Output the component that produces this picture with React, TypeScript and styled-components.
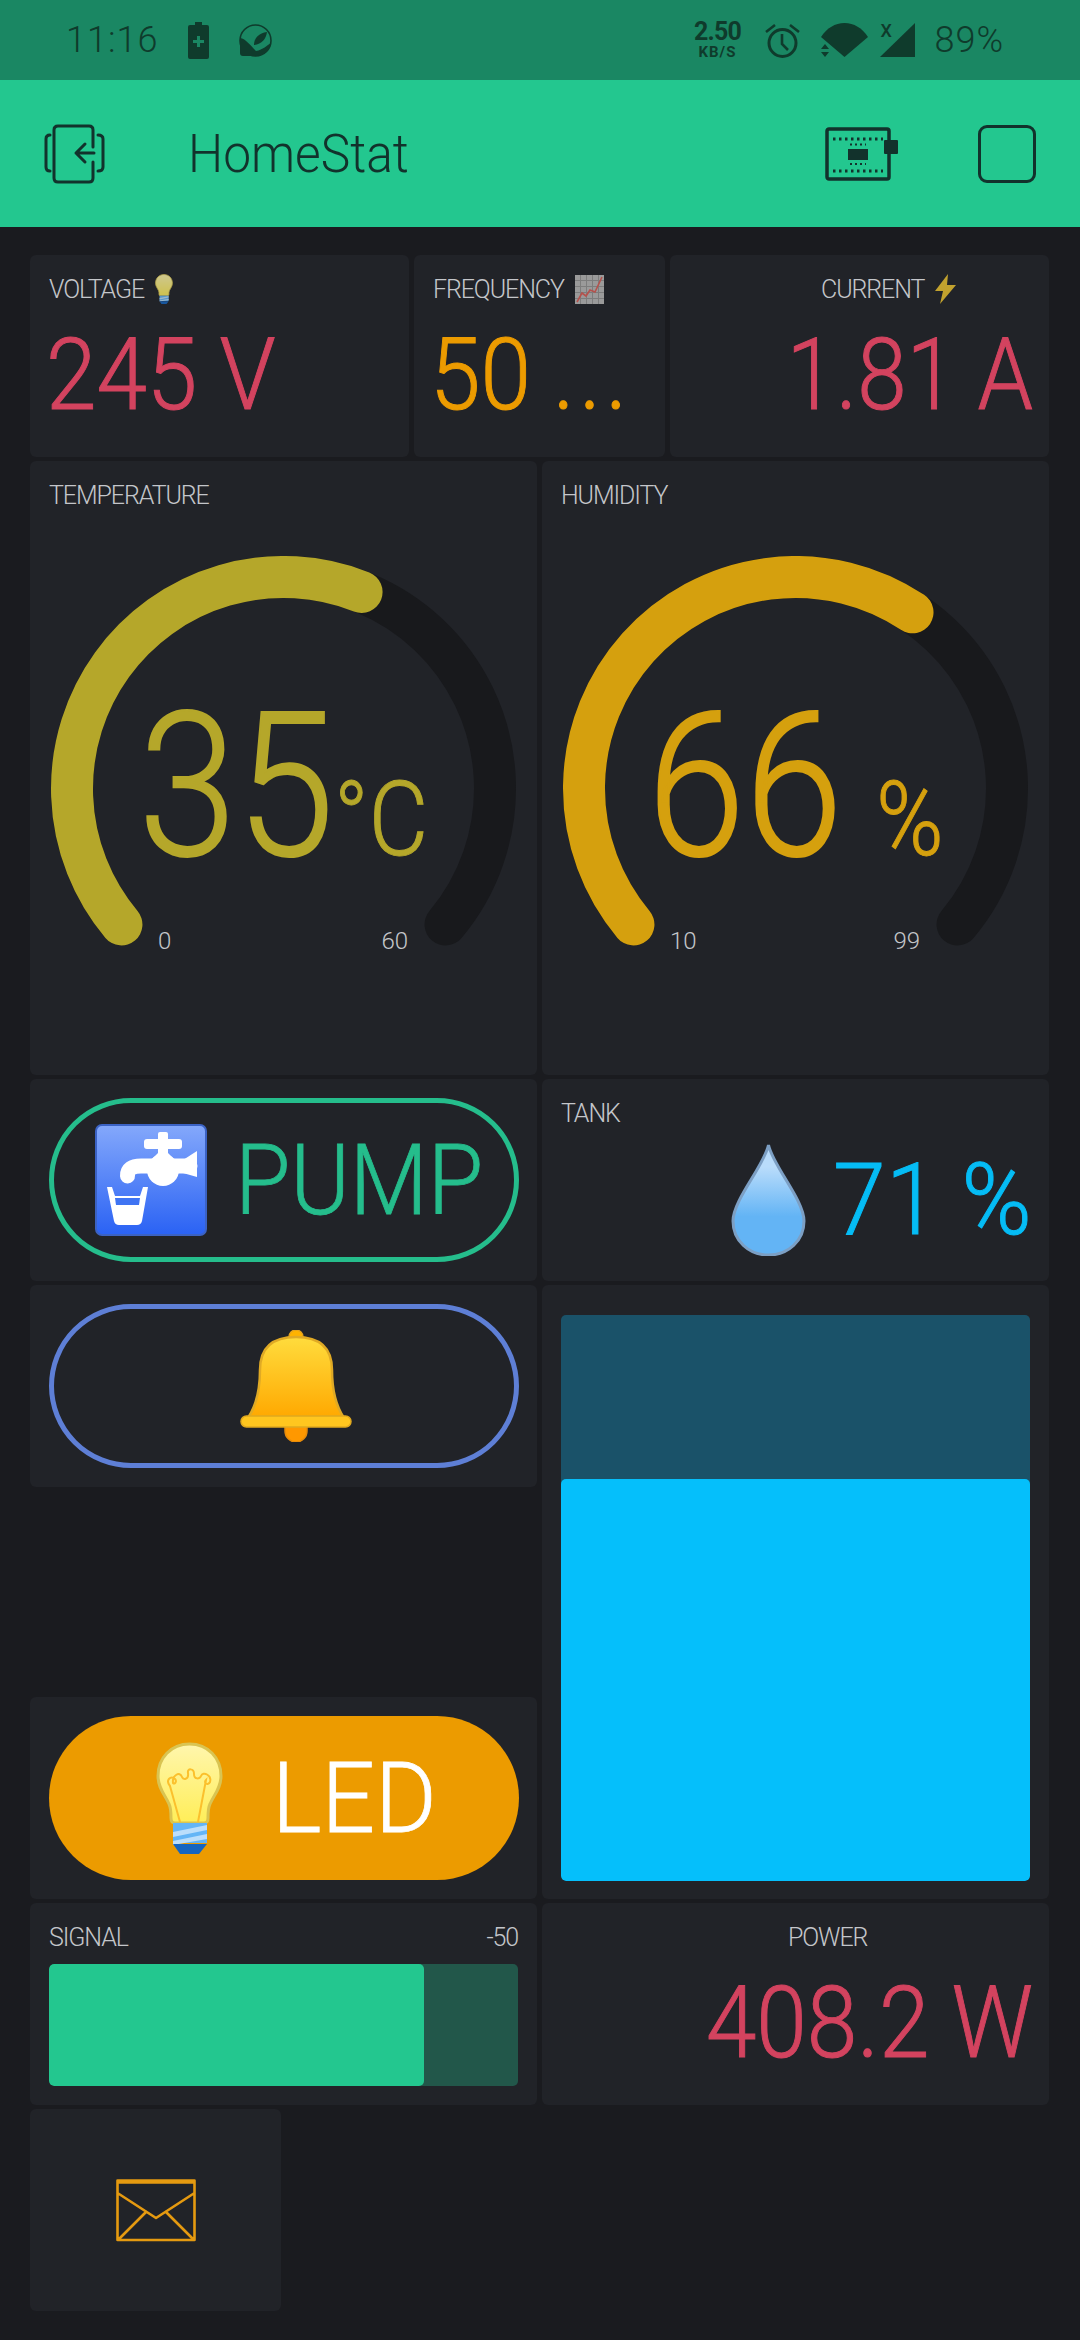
import styled, { createGlobalStyle } from "styled-components";

const GlobalStyle = createGlobalStyle`
  html, body {
    margin: 0;
    padding: 0;
    background: #1a1b1f;
    font-family: "Roboto", "Liberation Sans", sans-serif;
  }
`;

const INK = "#0f3b2c";
const BAR_INK = "#12322c";
const STATUS_BG = "#1a8763";
const RED = "#d3435f";
const ORANGE = "#ec9b00";
const BLUE = "#05bcf5";
const GREEN = "#23c78f";

const Screen = styled.div`
  width: 1080px;
  height: 2340px;
  overflow: hidden;
  background: #1a1b1f;
`;

const StatusBar = styled.div`
  height: 80px;
  box-sizing: border-box;
  padding: 0 76px 0 66px;
  background: ${STATUS_BG};
  color: ${INK};
  display: flex;
  align-items: center;
`;

const StatusText = styled.span`
  font-size: 36px;
  font-weight: 300;
  letter-spacing: 1px;
  display: inline-block;
`;

const StatusLeft = styled.div`
  display: flex;
  align-items: center;
  gap: 30px;
`;

const StatusRight = styled.div`
  margin-left: auto;
  display: flex;
  align-items: center;
`;

const Speed = styled.div`
  width: 50px;
  margin-right: 22px;
  display: flex;
  flex-direction: column;
  align-items: center;
  font-weight: 700;
  font-size: 25px;
  line-height: 24px;
  letter-spacing: -0.8px;
  span {
    font-size: 15px;
    line-height: 16px;
    letter-spacing: 1px;
  }
`;

const SignalWrap = styled.div`
  position: relative;
  width: 35px;
  height: 34px;
  margin-right: 19px;
`;

const SignalMark = styled.span`
  position: absolute;
  top: 0;
  left: 0;
  font-size: 18px;
  line-height: 15px;
  font-weight: 500;
`;

const AppBar = styled.div`
  height: 147px;
  box-sizing: border-box;
  padding: 0 44px;
  background: ${GREEN};
  display: flex;
  align-items: center;
`;

const Title = styled.div`
  margin-left: 82px;
  font-size: 54px;
  font-weight: 300;
  color: ${BAR_INK};
  transform: scaleX(0.92);
  transform-origin: left center;
`;

const BarActions = styled.div`
  margin-left: auto;
  display: flex;
  align-items: center;
  gap: 80px;
`;

const EmptyAction = styled.div`
  width: 58px;
  height: 58px;
  box-sizing: border-box;
  border: 3px solid ${BAR_INK};
  border-radius: 9px;
`;

const Board = styled.div`
  display: grid;
  grid-template-columns: repeat(8, 123px);
  grid-template-rows: repeat(10, 202px);
  column-gap: 5px;
  row-gap: 4px;
  padding: 28px 0 0 30px;
`;

const Card = styled.div<{ $col: string; $row: string }>`
  grid-column: ${(p) => p.$col};
  grid-row: ${(p) => p.$row};
  box-sizing: border-box;
  padding: 19px;
  background: #212328;
  border-radius: 6px;
  display: flex;
  flex-direction: column;
`;

const Label = styled.div<{ $offset?: number }>`
  height: 30px;
  padding-left: ${(p) => p.$offset || 0}px;
  display: flex;
  align-items: center;
  gap: 11px;
  font-size: 25px;
  font-weight: 300;
  letter-spacing: -1.1px;
  color: #c4c6ca;
`;

const Value = styled.div<{ $color: string; $right?: boolean; $squeeze: number }>`
  margin: 21px ${(p) => (p.$right ? "-3px" : "0")} 0 ${(p) => (p.$right ? "0" : "-3px")};
  font-size: 101px;
  line-height: 100px;
  font-weight: 300;
  -webkit-text-stroke: 1px ${(p) => p.$color};
  white-space: nowrap;
  color: ${(p) => p.$color};
  text-align: ${(p) => (p.$right ? "right" : "left")};
  transform: scaleX(${(p) => p.$squeeze});
  transform-origin: ${(p) => (p.$right ? "right" : "left")} center;
`;

const Dots = styled.span`
  letter-spacing: 5px;
`;

const SignalHead = styled.div`
  display: flex;
  justify-content: space-between;
`;

const Gauge = styled.div`
  position: relative;
  width: 469px;
  height: 420px;
  margin-top: 46px;
`;

const Readout = styled.div<{ $color: string }>`
  position: absolute;
  top: 131px;
  left: 0;
  right: 0;
  display: flex;
  justify-content: center;
  align-items: baseline;
  color: ${(p) => p.$color};
  -webkit-text-stroke: 2px ${(p) => p.$color};
  font-weight: 300;
  font-size: 200px;
  line-height: 200px;
  transform: scaleX(0.88);
`;

const Unit = styled.span<{ $gap: number }>`
  margin-left: ${(p) => p.$gap}px;
  font-size: 104px;
  line-height: 100px;
  -webkit-text-stroke-width: 1px;
`;

const Limit = styled.span<{ $side: "left" | "right"; $at: number }>`
  position: absolute;
  top: 370px;
  ${(p) => p.$side}: ${(p) => p.$at}px;
  font-size: 24px;
  line-height: 30px;
  font-weight: 300;
  color: #c4c6ca;
`;

const PillButton = styled.div<{ $border?: string; $fill?: string; $nudge: number }>`
  width: 470px;
  height: 164px;
  box-sizing: border-box;
  padding-left: ${(p) => p.$nudge}px;
  border: ${(p) => (p.$border ? `5px solid ${p.$border}` : "none")};
  background: ${(p) => p.$fill || "transparent"};
  border-radius: 82px;
  display: flex;
  align-items: center;
  justify-content: center;
`;

const ButtonText = styled.span<{ $color: string; $gap: number; $squeeze: number }>`
  margin-left: ${(p) => p.$gap}px;
  font-size: 99px;
  line-height: 100px;
  font-weight: 300;
  -webkit-text-stroke: 0.8px ${(p) => p.$color};
  color: ${(p) => p.$color};
  transform: scaleX(${(p) => p.$squeeze});
  transform-origin: left center;
`;

const TankRow = styled.div`
  margin-top: 16px;
  display: flex;
  justify-content: flex-end;
  align-items: center;
`;

const TankValue = styled.span`
  font-size: 101px;
  line-height: 100px;
  font-weight: 300;
  -webkit-text-stroke: 1px ${BLUE};
  width: 197px;
  margin-left: 27px;
  white-space: nowrap;
  color: ${BLUE};
  transform: scaleX(0.94);
  transform-origin: left center;
`;

const TankCard = styled(Card)`
  padding: 30px 19px 18px;
`;

const TankTrack = styled.div`
  flex: 1;
  background: #1a5269;
  border-radius: 5px;
  display: flex;
  flex-direction: column;
  justify-content: flex-end;
  overflow: hidden;
`;

const TankFill = styled.div`
  background: #05bffb;
  border-radius: 5px;
`;

const SignalTrack = styled.div`
  margin-top: 12px;
  height: 122px;
  background: #22574a;
  border-radius: 5px;
  overflow: hidden;
`;

const SignalFill = styled.div`
  height: 100%;
  background: ${GREEN};
  border-radius: 5px;
`;

const MailCard = styled(Card)`
  align-items: center;
  justify-content: center;
`;

function BatteryIcon() {
  return (
    <svg width="21" height="37" viewBox="0 0 21 37">
      <path d="M7 0h7v3h5q2 0 2 2v30q0 2-2 2H2q-2 0-2-2V5q0-2 2-2h5z" fill={INK} />
      <path d="M9 14h3v4h4v3h-4v4H9v-4H5v-3h4z" fill={STATUS_BG} />
    </svg>
  );
}

function AppBadge() {
  return (
    <svg width="33" height="33" viewBox="0 0 33 33">
      <circle cx="16.5" cy="16.5" r="15.5" fill="none" stroke={INK} strokeWidth="1.6" />
      <path d="M1 14C7 15 11 21 17 27 24 26 28 21 32 19 31 27 24 32 16.5 32H4Q1 32 1 29z" fill={INK} />
      <path d="M15 21C15 14 20 9 28 8 27 15 23 20 15 21z" fill={INK} />
    </svg>
  );
}

function AlarmIcon() {
  return (
    <svg width="37" height="36" viewBox="0 0 37 36" style={{ marginRight: 20 }}>
      <circle cx="18.5" cy="21" r="13.5" fill="none" stroke={INK} strokeWidth="3" />
      <path d="M18 12v10l6 6M2 10l9-7M35 10l-9-7" fill="none" stroke={INK} strokeWidth="2.6" />
    </svg>
  );
}

function WifiIcon() {
  return (
    <svg width="47" height="34" viewBox="0 0 47 34" style={{ marginRight: 12 }}>
      <path d="M0 14C6 5 14 0 23.500 0S41 5 47 14L23.500 34z" fill={INK} />
      <path d="M4 21l4 5H0zM4 34l-4-5H8z" fill={INK} />
    </svg>
  );
}

function SignalIcon() {
  return (
    <SignalWrap>
      <svg width="35" height="34" viewBox="0 0 35 34">
        <path d="M0 34L35 0V34z" fill={INK} />
      </svg>
      <SignalMark>X</SignalMark>
    </SignalWrap>
  );
}

function ExitIcon() {
  return (
    <svg width="62" height="60" viewBox="0 0 62 60">
      <g fill="none" stroke={BAR_INK} strokeWidth="3" strokeLinecap="round" strokeLinejoin="round">
        <path d="M49 23V6q0-4-4-4H14q-4 0-4 4v48q0 4 4 4h31q4 0 4-4V38" />
        <path d="M6 11Q2 11 2 15V43Q2 47 6 47M54 11Q59 11 59 15V43Q59 47 54 47" />
        <path d="M50 29H32M41 20l-9 9 9 9" />
      </g>
    </svg>
  );
}

function BoardIcon() {
  return (
    <svg width="73" height="54" viewBox="0 0 73 54">
      <rect x="2" y="2" width="62" height="50" rx="2" fill="none" stroke={BAR_INK} strokeWidth="3.500" />
      <rect x="59" y="13" width="14" height="14" rx="1" fill={BAR_INK} />
      <rect x="23" y="22" width="20" height="11" fill={BAR_INK} />
      <path d="M8 12H58M8 44H58" stroke={BAR_INK} strokeWidth="3" strokeDasharray="2.500 3.500" />
      <path d="M25 17.500H41M25 37H41" stroke={BAR_INK} strokeWidth="2" strokeDasharray="2 3" />
    </svg>
  );
}

function BulbIcon({ height, dim }: { height: number; dim?: boolean }) {
  return (
    <svg width={(height * 67) / 112} height={height} viewBox="0 0 67 112" opacity={dim ? 0.78 : 1}>
      <defs>
        <linearGradient id="bulbGlass" x1="0" y1="0" x2="0" y2="1">
          <stop offset="0" stopColor="#fff6ad" />
          <stop offset="1" stopColor="#ffee58" />
        </linearGradient>
      </defs>
      <path
        d="M33.500 2C15 2 2 16 2 34 2 46 9 53 13 62 15 66 15 70 15 76 15 79 16 81 19 81H48C51 81 52 79 52 76 52 70 52 66 54 62 58 53 65 46 65 34 65 16 52 2 33.500 2Z"
        fill="url(#bulbGlass)"
        stroke="#d9c452"
        strokeWidth="3"
      />
      {!dim && (
        <path
          d="M24 80L14 44C9 38 15 33 19 37 21 39 19 43 17 41 16 33 24 29 26 35 27 38 33 38 32 31 31 26 38 26 38 32 38 38 44 37 45 34 47 29 56 33 54 40 52 44 47 41 50 38L42 80"
          fill="none"
          stroke="#fbc02d"
          strokeWidth="2"
        />
      )}
      <path d="M17 81H51V101H17z" fill="#64b5f6" />
      <path d="M17 90L51 83V88L17 95zM17 99L51 92V97L17 103z" fill="#bbdefb" />
      <path d="M17 102H51L43 112H24z" fill="#1565c0" />
    </svg>
  );
}

function ChartIcon() {
  return (
    <svg width="29" height="29" viewBox="0 0 29 29">
      <rect width="29" height="29" fill="#9a9a9a" />
      <path
        d="M0 5.500H29M0 11.500H29M0 17.500H29M0 23.500H29M5.500 0V29M11.500 0V29M17.500 0V29M23.500 0V29"
        stroke="#7d7d7d"
        strokeWidth="1"
      />
      <path d="M2 27L7 18 11 21 15 15 20 17 27 2" fill="none" stroke="#b5524d" strokeWidth="1.600" />
    </svg>
  );
}

function BoltIcon() {
  return (
    <svg width="21" height="30" viewBox="0 0 21 30">
      <path d="M13 0L0 17H8L5 30 21 11H12z" fill="#c2a22e" />
    </svg>
  );
}

function TapIcon() {
  return (
    <svg width="112" height="112" viewBox="0 0 112 112">
      <defs>
        <linearGradient id="tapBg" x1="0" y1="0" x2="0" y2="1">
          <stop offset="0" stopColor="#84a8fb" />
          <stop offset="1" stopColor="#2a62f4" />
        </linearGradient>
      </defs>
      <rect x="1" y="1" width="110" height="110" rx="6" fill="url(#tapBg)" stroke="#3b62c4" strokeWidth="2" />
      <rect x="49" y="15" width="38" height="10" rx="3" fill="#fff" />
      <rect x="63" y="8" width="10" height="24" rx="2" fill="#fff" />
      <path d="M32.500 52Q32 42 46 42H95" fill="none" stroke="#fff" strokeWidth="15" strokeLinecap="round" />
      <circle cx="68" cy="46" r="16" fill="#fff" />
      <path d="M58 34L66 26H70L78 34z" fill="#fff" />
      <path d="M88 36L102 27V53L88 49z" fill="#fff" />
      <path d="M12 63H17L20 72H45L48 63H53L47 97Q46 101 42 101H24Q20 101 19 97z" fill="#fff" />
      <path d="M20 74H45L44 81H21z" fill="#3f74f3" />
    </svg>
  );
}

function DropIcon() {
  return (
    <svg width="75" height="112" viewBox="0 0 75 112">
      <defs>
        <linearGradient id="dropFill" x1="0" y1="0" x2="0" y2="1">
          <stop offset="0.2" stopColor="#b9dcfb" />
          <stop offset="0.65" stopColor="#63b4f5" />
        </linearGradient>
      </defs>
      <path
        d="M37.500 1C33 22 2 56 2 77 2 97 18 111 37.500 111S73 97 73 77C73 56 42 22 37.500 1Z"
        fill="url(#dropFill)"
        stroke="#7c9fc4"
        strokeWidth="3"
      />
    </svg>
  );
}

function BellIcon() {
  return (
    <svg width="112" height="112" viewBox="0 0 112 112">
      <defs>
        <linearGradient id="bellFill" x1="0" y1="0" x2="0" y2="1">
          <stop offset="0" stopColor="#ffdc3d" />
          <stop offset="1" stopColor="#ffa800" />
        </linearGradient>
      </defs>
      <rect x="49" y="0" width="14" height="16" rx="7" fill="#ffb300" stroke="#e8a41c" strokeWidth="1.500" />
      <path d="M45 95H67V101A11 11 0 0 1 45 101z" fill="#ff9800" stroke="#e88c0a" strokeWidth="1.500" />
      <path
        d="M56 7C32 7 20 18 20 40 20 62 16 76 8 88H104C96 76 92 62 92 40 92 18 80 7 56 7Z"
        fill="url(#bellFill)"
        stroke="#e0aa25"
        strokeWidth="2.500"
      />
      <rect x="1" y="86" width="110" height="11" rx="5.500" fill="#ffc61f" stroke="#e0a91f" strokeWidth="1.500" />
    </svg>
  );
}

function MailIcon() {
  return (
    <svg width="80" height="64" viewBox="0 0 80 64">
      <path
        d="M1.500 2.500H78.500V62H1.500ZM1.500 4.500H78.500M1.500 15L40 40 78.500 15M31 33L3 61M49 33L77 61"
        fill="none"
        stroke="#e59a10"
        strokeWidth="2.600"
        strokeLinejoin="round"
      />
    </svg>
  );
}

const GAUGE_CX = 234.5;
const GAUGE_CY = 232.5;
const GAUGE_R = 211.5;
const GAUGE_SWEEP = 260;

// angle in degrees, clockwise from straight up
function arcPoint(deg: number) {
  const rad = (deg * Math.PI) / 180;
  return `${GAUGE_CX + GAUGE_R * Math.sin(rad)} ${GAUGE_CY - GAUGE_R * Math.cos(rad)}`;
}

function arcPath(from: number, to: number) {
  const large = to - from > 180 ? 1 : 0;
  return `M${arcPoint(from)}A${GAUGE_R} ${GAUGE_R} 0 ${large} 1 ${arcPoint(to)}`;
}

function GaugeWidget({
  value,
  min,
  max,
  unit,
  unitGap,
  color,
}: {
  value: number;
  min: number;
  max: number;
  unit: string;
  unitGap: number;
  color: string;
}) {
  const start = -GAUGE_SWEEP / 2;
  const end = start + ((value - min) / (max - min)) * GAUGE_SWEEP;
  return (
    <Gauge>
      <svg width="469" height="420" viewBox="0 0 469 420">
        <path d={arcPath(start, -start)} fill="none" stroke="#18191c" strokeWidth="42" strokeLinecap="round" />
        <path d={arcPath(start, end)} fill="none" stroke={color} strokeWidth="42" strokeLinecap="round" />
      </svg>
      <Readout $color={color}>
        {value}
        <Unit $gap={unitGap}>{unit}</Unit>
      </Readout>
      <Limit $side="left" $at={109}>
        {min}
      </Limit>
      <Limit $side="right" $at={110}>
        {max}
      </Limit>
    </Gauge>
  );
}

export default function App() {
  const tankLevel = 71;
  const signalLevel = 80;

  return (
    <Screen>
      <GlobalStyle />
      <StatusBar>
        <StatusLeft>
          <StatusText>11:16</StatusText>
          <BatteryIcon />
          <AppBadge />
        </StatusLeft>
        <StatusRight>
          <Speed>
            2.50
            <span>KB/S</span>
          </Speed>
          <AlarmIcon />
          <WifiIcon />
          <SignalIcon />
          <StatusText>89%</StatusText>
        </StatusRight>
      </StatusBar>

      <AppBar>
        <ExitIcon />
        <Title>HomeStat</Title>
        <BarActions>
          <BoardIcon />
          <EmptyAction />
        </BarActions>
      </AppBar>

      <Board>
        <Card $col="1 / span 3" $row="1">
          <Label>
            VOLTAGE
            <BulbIcon height={30} dim />
          </Label>
          <Value $color={RED} $squeeze={0.9}>
            245 V
          </Value>
        </Card>
        <Card $col="4 / span 2" $row="1">
          <Label>
            FREQUENCY
            <ChartIcon />
          </Label>
          <Value $color={ORANGE} $squeeze={0.9}>
            50 <Dots>...</Dots>
          </Value>
        </Card>
        <Card $col="6 / span 3" $row="1">
          <Label $offset={132}>
            CURRENT
            <BoltIcon />
          </Label>
          <Value $color={RED} $right $squeeze={0.88}>
            1.81 A
          </Value>
        </Card>

        <Card $col="1 / span 4" $row="2 / span 3">
          <Label>TEMPERATURE</Label>
          <GaugeWidget value={35} min={0} max={60} unit="°C" unitGap={0} color="#b5a72a" />
        </Card>
        <Card $col="5 / span 4" $row="2 / span 3">
          <Label>HUMIDITY</Label>
          <GaugeWidget value={66} min={10} max={99} unit="%" unitGap={38} color="#d5a00e" />
        </Card>

        <Card $col="1 / span 4" $row="5">
          <PillButton $border="#25bd8c" $nudge={35}>
            <TapIcon />
            <ButtonText $color="#25bd8c" $gap={28} $squeeze={0.91}>
              PUMP
            </ButtonText>
          </PillButton>
        </Card>
        <Card $col="5 / span 4" $row="5">
          <Label>TANK</Label>
          <TankRow>
            <DropIcon />
            <TankValue>71 %</TankValue>
          </TankRow>
        </Card>

        <Card $col="1 / span 4" $row="6">
          <PillButton $border="#5e7fd6" $nudge={24}>
            <BellIcon />
          </PillButton>
        </Card>
        <TankCard $col="5 / span 4" $row="6 / span 3">
          <TankTrack>
            <TankFill style={{ height: `${tankLevel}%` }} />
          </TankTrack>
        </TankCard>

        <Card $col="1 / span 4" $row="8">
          <PillButton $fill={ORANGE} $nudge={34}>
            <BulbIcon height={112} />
            <ButtonText $color="#ffffff" $gap={49} $squeeze={0.95}>
              LED
            </ButtonText>
          </PillButton>
        </Card>

        <Card $col="1 / span 4" $row="9">
          <SignalHead>
            <Label>SIGNAL</Label>
            <Label>-50</Label>
          </SignalHead>
          <SignalTrack>
            <SignalFill style={{ width: `${signalLevel}%` }} />
          </SignalTrack>
        </Card>
        <Card $col="5 / span 4" $row="9">
          <Label $offset={227}>POWER</Label>
          <Value $color={RED} $right $squeeze={0.9}>
            408.2 W
          </Value>
        </Card>

        <MailCard $col="1 / span 2" $row="10">
          <MailIcon />
        </MailCard>
      </Board>
    </Screen>
  );
}
